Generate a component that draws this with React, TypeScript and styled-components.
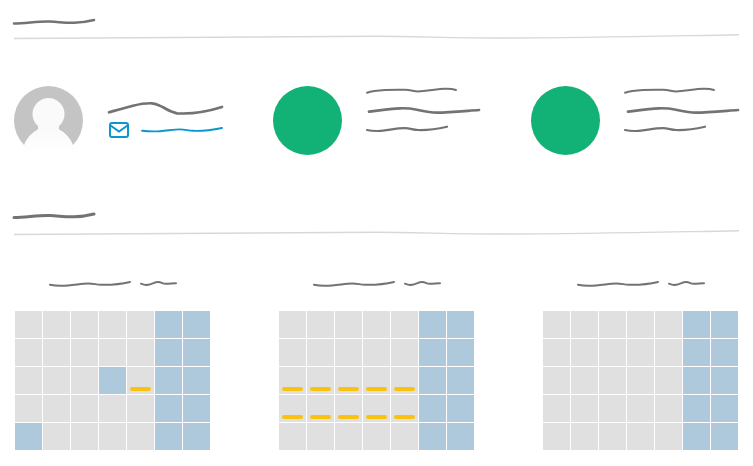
import React from 'react';
import styled, { createGlobalStyle } from 'styled-components';

const GlobalStyle = createGlobalStyle`
  html, body {
    margin: 0;
    padding: 0;
    background: #fff;
    font-family: "Liberation Sans", Arial, sans-serif;
  }
`;

const Page = styled.div`
  width: 753px;
  height: 466px;
  padding: 18px 14px 0;
  box-sizing: border-box;
  overflow: hidden;
`;

const Stroke = styled.svg<{ $indent?: number }>`
  display: block;
  flex: none;
  overflow: visible;
  margin-left: ${p => p.$indent ?? 0}px;
`;

const Divider = styled(Stroke)<{ $top: number }>`
  margin-top: ${p => p.$top}px;
`;

const SectionTitle = styled(Stroke)<{ $top?: number }>`
  margin-top: ${p => p.$top ?? 0}px;
`;

const ProfileRow = styled.div`
  display: grid;
  grid-template-columns: 259px 258px 1fr;
  margin-top: 45px;
`;

const Profile = styled.div<{ $gap: number }>`
  display: flex;
  gap: ${p => p.$gap}px;
`;

const Avatar = styled.svg`
  display: block;
  flex: none;
  overflow: hidden;
`;

const GreenDot = styled.div`
  width: 69px;
  height: 69px;
  flex: none;
  border-radius: 50%;
  background: #12b277;
`;

const Lines = styled.div`
  display: flex;
  flex-direction: column;
  gap: 10px;
`;

const ContactBlock = styled.div`
  display: flex;
  flex-direction: column;
  gap: 7px;
  padding-top: 15px;
`;

const MailRow = styled.div`
  display: flex;
  align-items: center;
  gap: 13px;
`;

const Calendars = styled.div`
  display: grid;
  grid-template-columns: repeat(3, 195px);
  column-gap: 69px;
  margin: 44px 0 0 1px;
`;

const Calendar = styled.div`
  display: flex;
  flex-direction: column;
  gap: 24px;
`;

const MonthLabel = styled.div`
  display: flex;
  justify-content: center;
  gap: 11px;
`;

const Days = styled.div`
  display: grid;
  grid-template-columns: repeat(7, 27px);
  grid-auto-rows: 27px;
  gap: 1px;
`;

const Day = styled.div<{ $off: boolean }>`
  display: flex;
  align-items: flex-end;
  justify-content: center;
  padding-bottom: 3px;
  box-sizing: border-box;
  background: ${p => (p.$off ? '#aec9dc' : '#e0e0e0')};
`;

const Marker = styled.div`
  width: 21px;
  height: 4px;
  border-radius: 2px;
  background: #f9c20f;
`;

const GREY = '#737373';
const BLUE = '#0b96d0';

const TITLE = 'M0 5.5C12 5.5 24 3 36 3.5C46 4 50 5 60 4.8C68 4.6 74 3.5 80 2';
const RULE = 'M0 5.5C120 5.5 240 3.5 362 3.3C400 3.3 440 5 485 5C570 5 650 3 725 1.7';
const NAME = 'M0 11.3C8 9 16 6.6 24 4.7C31 3 37 2 43 2.3C48 2.6 50 4.5 54 6.3C59 9 63 11.6 68 12.3C78 12.9 94 12 113 6';
const EMAIL = 'M0 3.7C6 4.4 12 4.6 18 4.2C26 3.6 32 2.4 38 2.4C43 2.4 46 3.6 51 3.8C60 4.2 70 3 80 1';
const LINE_A = 'M0 6.7C5 5 11 4.4 18 4C26 3.7 32 3.6 38 3.8C44 4 47 5.4 51 5.4C59 5.4 70 3 78 2.8C82 2.7 86 3 89 4';
const LINE_B = 'M0 6.7C10 5.4 21 3.6 31 3.3C38 3.1 43 3.7 48 4.7C54 6 60 7.6 68 7.6C80 7.6 96 6 110 5';
const LINE_C = 'M0 5C4 6 7 6.1 11 6C20 5.6 29 3.2 38 3.2C43 3.2 46 4.8 51 5C60 5.3 70 4 80 1.7';
const MONTH = 'M0 3.7C6 5 12 4.9 18 4.4C26 3.8 32 2.6 38 2.5C43 2.4 46 3.6 51 3.8C60 4 70 3.4 80 1';
const YEAR = 'M0 2.7C3 4 5 4.2 7 3.8C11 3 14 1 17 1C20 1 21 2.4 23 2.6C27 2.9 31 2.2 35 2.2';

type ScribbleProps = {
  d: string;
  w: number;
  h: number;
  color?: string;
  weight?: number;
  indent?: number;
};

const Scribble = ({ d, w, h, color = GREY, weight = 2, indent }: ScribbleProps) => (
  <Stroke $indent={indent} width={w} height={h} viewBox={`0 0 ${w} ${h}`} fill="none">
    <path d={d} stroke={color} strokeWidth={weight} strokeLinecap="round" />
  </Stroke>
);

const Rule = ({ top }: { top: number }) => (
  <Divider $top={top} width={725} height={8} viewBox="0 0 725 8" fill="none">
    <path d={RULE} stroke="#d8d8d8" strokeWidth={1.4} />
  </Divider>
);

const UserAvatar = () => (
  <Avatar width={69} height={69} viewBox="0 0 69 69">
    <defs>
      <linearGradient id="avatar-body" x1="0" y1="0" x2="0" y2="1">
        <stop offset="0" stopColor="#fafafa" />
        <stop offset="0.45" stopColor="#ffffff" />
      </linearGradient>
    </defs>
    <circle cx={34.5} cy={34.5} r={34.5} fill="#c4c4c4" />
    <rect x={24} y={30} width={21} height={16} fill="#fafafa" />
    <circle cx={34.5} cy={28} r={16} fill="#fafafa" />
    <ellipse cx={34.5} cy={72} rx={27} ry={31} fill="url(#avatar-body)" />
  </Avatar>
);

const MailIcon = () => (
  <svg width={20} height={16} viewBox="0 0 20 16" fill="none" stroke={BLUE} strokeWidth={2}>
    <rect x={1} y={1} width={18} height={14} rx={2} />
    <path d="M1.5 3.5L10 9.5L18.5 3.5" />
  </svg>
);

const TextLines = ({ indent }: { indent: number }) => (
  <Lines>
    <Scribble d={LINE_A} w={89} h={9} />
    <Scribble d={LINE_B} w={110} h={10} weight={2.7} indent={indent} />
    <Scribble d={LINE_C} w={80} h={8} weight={2.2} />
  </Lines>
);

const WEEKEND = [5, 6];

const CalendarBlock = ({ off = [], marks = [] }: { off?: number[]; marks?: number[] }) => (
  <Calendar>
    <MonthLabel>
      <Scribble d={MONTH} w={80} h={6} />
      <Scribble d={YEAR} w={35} h={6} />
    </MonthLabel>
    <Days>
      {Array.from({ length: 35 }, (_, i) => (
        <Day key={i} $off={WEEKEND.includes(i % 7) || off.includes(i)}>
          {marks.includes(i) && <Marker />}
        </Day>
      ))}
    </Days>
  </Calendar>
);

export default function App() {
  return (
    <>
      <GlobalStyle />
      <Page>
        <Scribble d={TITLE} w={80} h={8} weight={2.6} />
        <Rule top={7} />

        <ProfileRow>
          <Profile $gap={26}>
            <UserAvatar />
            <ContactBlock>
              <Scribble d={NAME} w={114} h={14} weight={2.7} />
              <MailRow>
                <MailIcon />
                <Scribble d={EMAIL} w={81} h={6} color={BLUE} weight={1.9} />
              </MailRow>
            </ContactBlock>
          </Profile>
          <Profile $gap={25}>
            <GreenDot />
            <TextLines indent={2} />
          </Profile>
          <Profile $gap={25}>
            <GreenDot />
            <TextLines indent={3} />
          </Profile>
        </ProfileRow>

        <SectionTitle $top={57} width={80} height={8} viewBox="0 0 80 8" fill="none">
          <path d={TITLE} stroke={GREY} strokeWidth={3} strokeLinecap="round" />
        </SectionTitle>
        <Rule top={9} />

        <Calendars>
          <CalendarBlock off={[17, 28]} marks={[18]} />
          <CalendarBlock marks={[14, 15, 16, 17, 18, 21, 22, 23, 24, 25]} />
          <CalendarBlock />
        </Calendars>
      </Page>
    </>
  );
}
